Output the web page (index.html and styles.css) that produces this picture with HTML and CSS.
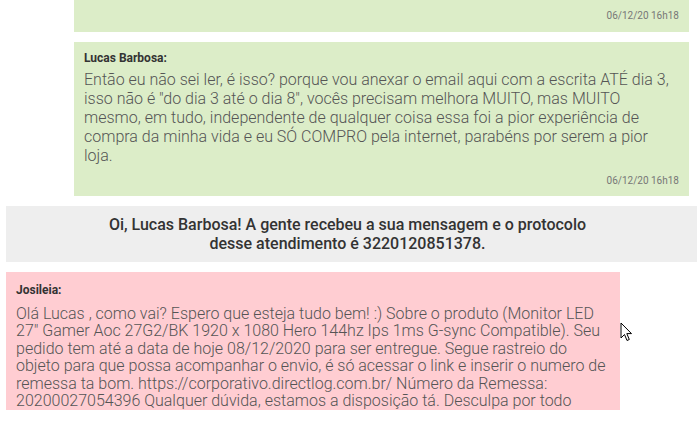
FILE: index.html
```html
<!DOCTYPE html>
<html lang="pt-BR">
<head>
<meta charset="utf-8">
<link rel="stylesheet" href="styles.css">
</head>
<body>
<div class="chat">
  <div class="msg msg-user msg-first">
    <div class="date">06/12/20 16h18</div>
  </div>
  <div class="msg msg-user">
    <div class="name">Lucas Barbosa:</div>
    <div class="text">Então eu não sei ler, é isso? porque vou anexar o email aqui com a escrita ATÉ dia 3, isso não é "do dia 3 até o dia 8", vocês precisam melhora MUITO, mas MUITO mesmo, em tudo, independente de qualquer coisa essa foi a pior experiência de compra da minha vida e eu SÓ COMPRO pela internet, parabéns por serem a pior loja.</div>
    <div class="date">06/12/20 16h18</div>
  </div>
  <div class="notice">
    <p>Oi, Lucas Barbosa! A gente recebeu a sua mensagem e o protocolo desse atendimento é 3220120851378.</p>
  </div>
  <div class="msg msg-agent">
    <div class="name">Josileia:</div>
    <div class="text">Olá Lucas , como vai? Espero que esteja tudo bem! :) Sobre o produto (Monitor LED 27" Gamer Aoc 27G2/BK 1920 x 1080 Hero 144hz Ips 1ms G-sync Compatible). Seu pedido tem até a data de hoje 08/12/2020 para ser entregue. Segue rastreio do objeto para que possa acompanhar o envio, é só acessar o link e inserir o numero de remessa ta bom. https://corporativo.directlog.com.br/ Número da Remessa: 20200027054396 Qualquer dúvida, estamos a disposição tá. Desculpa por todo transtorno causado, tenha um ótimo dia!</div>
  </div>
</div>
<svg class="cursor" width="13" height="20" viewBox="0 0 13 20"><path d="M1 1 L1 16 L4.5 12.5 L7 18.5 L9.3 17.5 L6.8 11.6 L11.5 11.6 Z" fill="#fff" stroke="#000" stroke-width="1" stroke-linejoin="miter"/></svg>
</body>
</html>
```
FILE: styles.css
```css
html, body {
  margin: 0;
  padding: 0;
  background: #fff;
}
body {
  position: relative;
  width: 697px;
  height: 423px;
  overflow: hidden;
  font-family: Roboto, "Liberation Sans", sans-serif;
}
.chat {
  height: 410px;
  overflow: hidden;
  display: flex;
  flex-direction: column;
  gap: 10px;
}
.msg {
  padding: 9px 10px;
  flex-shrink: 0;
}
.msg-user {
  background: #dcedc8;
  margin-left: 74px;
  margin-right: 8px;
}
.msg-first {
  height: 32px;
  box-sizing: border-box;
  padding-top: 10px;
}
.msg-first .date {
  margin-top: 0;
}
.msg-user .text {
  line-height: 19px;
}
.msg-agent {
  background: #ffcdd2;
  margin-left: 6px;
  width: 594px;
  padding-top: 11px;
}
.name {
  font-weight: 700;
  font-size: 12px;
  line-height: 14px;
  color: #333;
  margin-bottom: 5px;
}
.msg-agent .name {
  margin-bottom: 8px;
}
.text {
  font-weight: 300;
  font-size: 16px;
  line-height: 17.4px;
  color: #555;
}
.date {
  font-size: 10px;
  line-height: 12px;
  color: #777;
  text-align: right;
  margin-top: 10px;
}
.notice {
  flex-shrink: 0;
  background: #eee;
  margin-left: 6px;
  height: 56px;
  box-sizing: border-box;
  padding: 9px 8px 0 0;
}
.notice p {
  margin: 0 auto;
  width: 500px;
  text-align: center;
  font-weight: 500;
  font-size: 16px;
  line-height: 19px;
  color: #333;
}
.cursor {
  position: absolute;
  left: 620px;
  top: 322px;
}
```
